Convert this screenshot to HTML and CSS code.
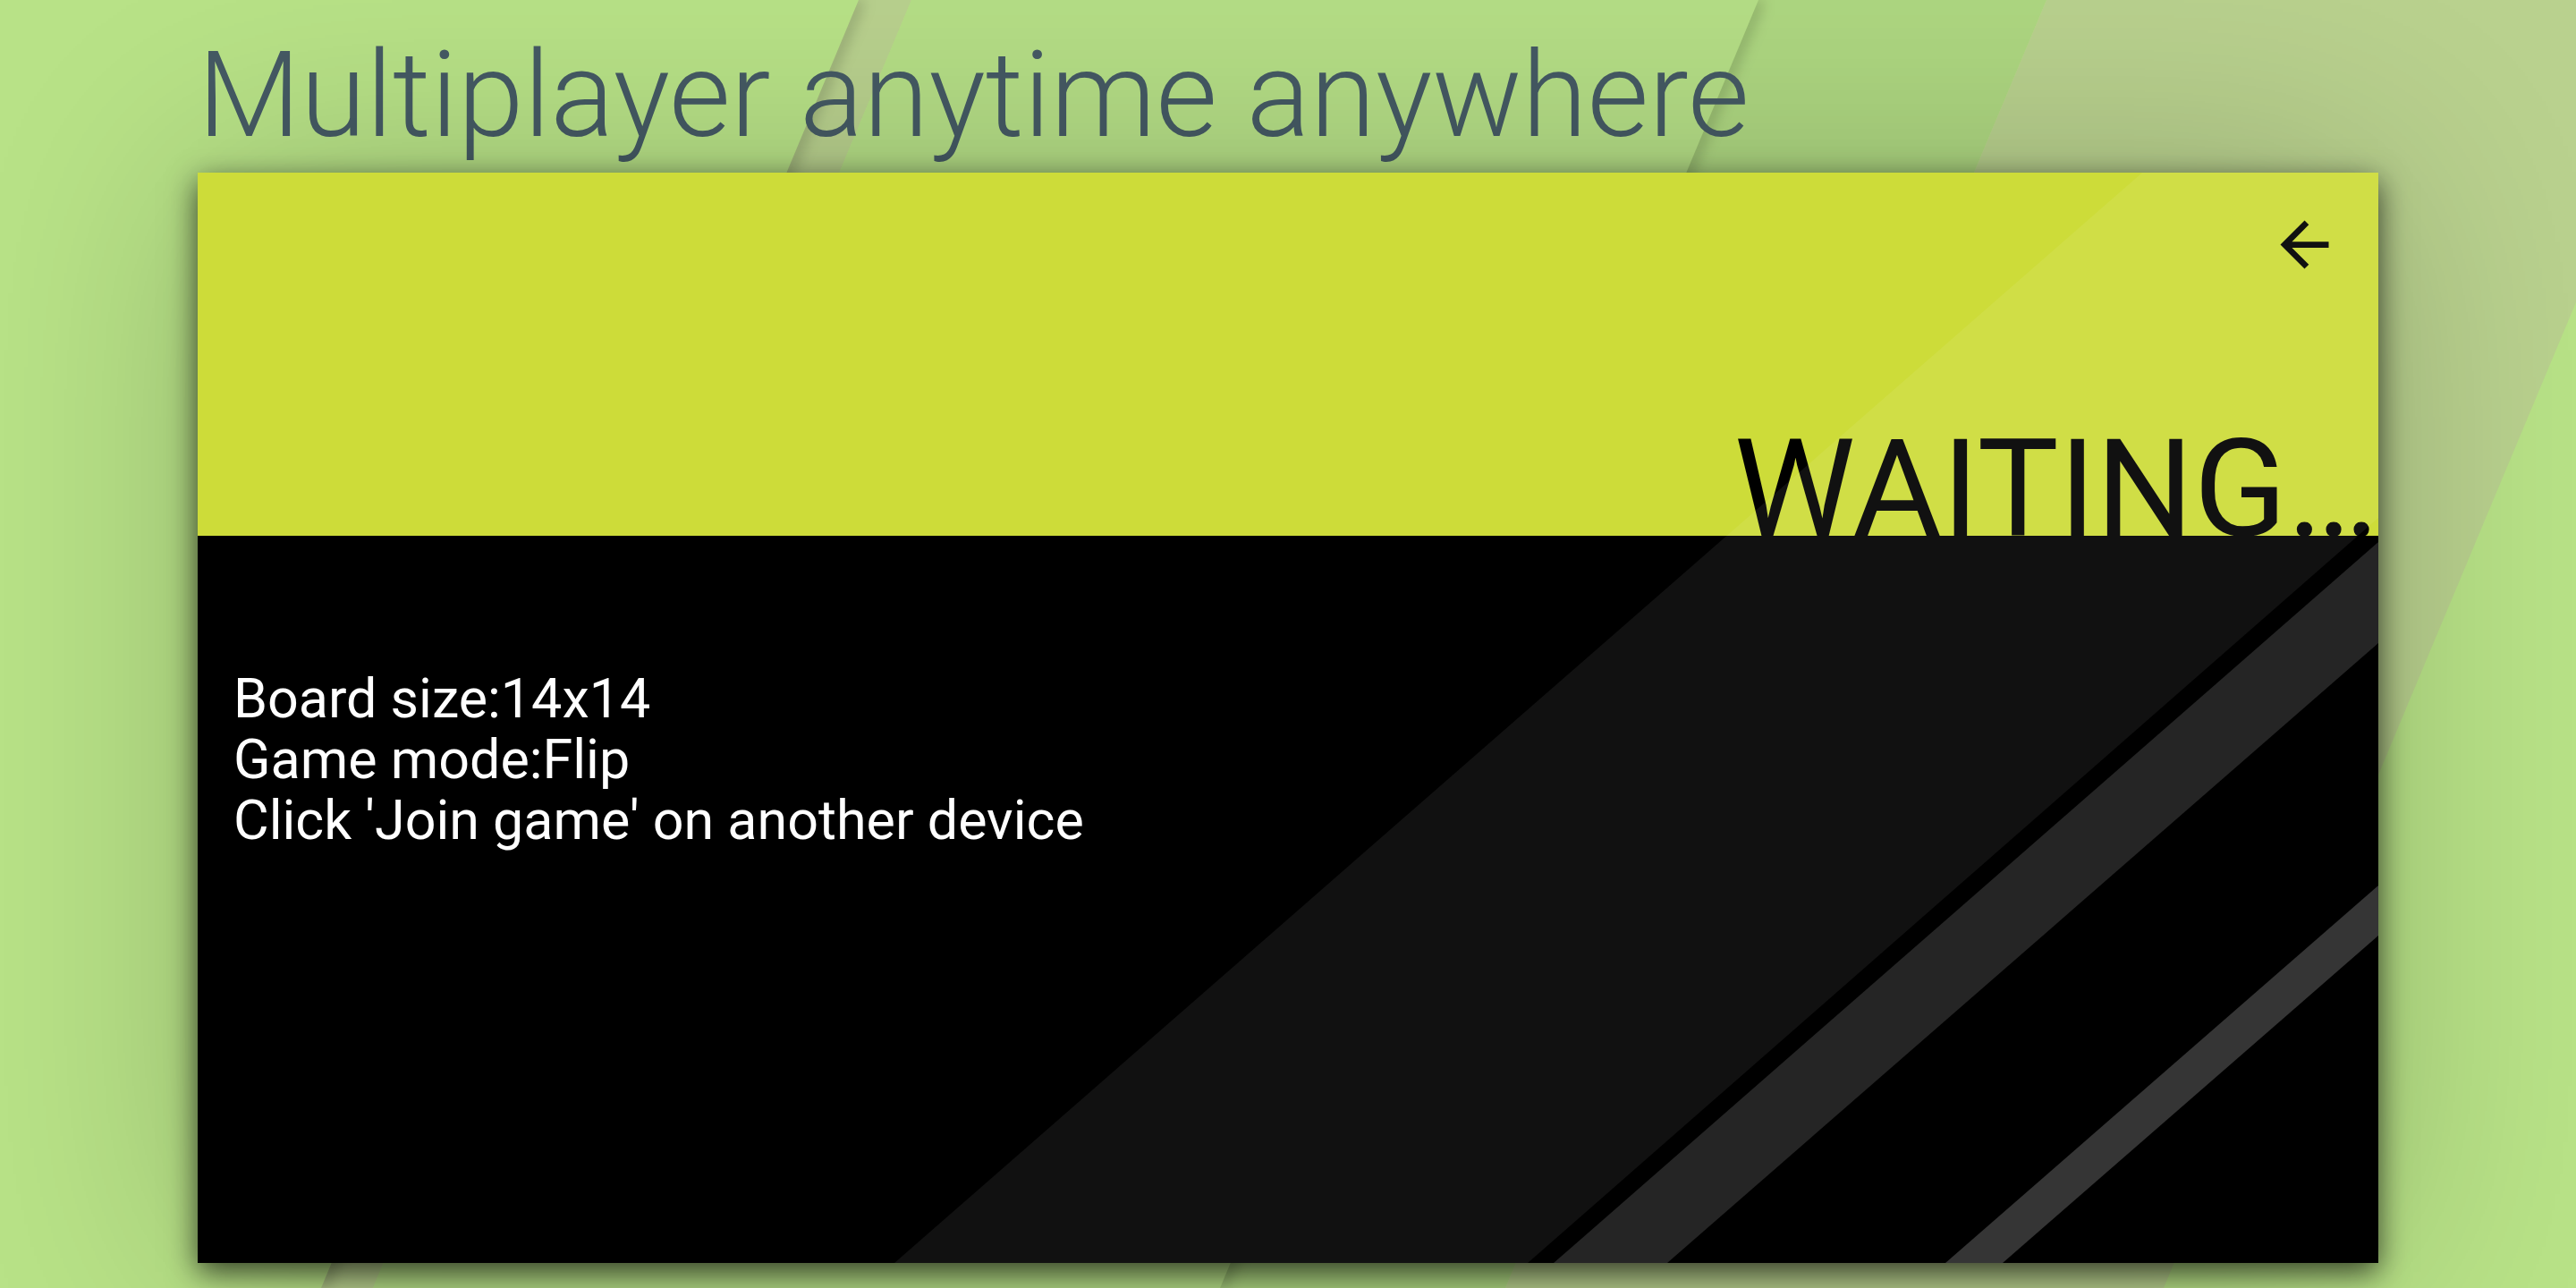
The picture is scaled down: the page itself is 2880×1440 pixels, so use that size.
FILE: index.html
```html
<!DOCTYPE html>
<html lang="en">
<head>
<meta charset="utf-8">
<title>Multiplayer anytime anywhere</title>
<link rel="stylesheet" href="styles.css">
</head>
<body>
<svg class="backdrop" viewBox="0 0 2880 1440" preserveAspectRatio="none" aria-hidden="true">
  <defs>
    <filter id="edge" x="-20%" y="-5%" width="140%" height="110%"><feGaussianBlur stdDeviation="8"/></filter>
    <clipPath id="right-of-first"><path d="M960 0H2880V1440H359Z"/></clipPath>
    <clipPath id="right-of-second"><path d="M1966 0H2880V1440H1364Z"/></clipPath>
  </defs>
  <path class="band-brown" d="M960 0H1019L417 1440H359Z"/>
  <path class="band-light" d="M1019 0H1966L1364 1440H417Z"/>
  <path class="band-green" d="M1966 0H2288L1683 1440H1364Z"/>
  <path class="band-brown" d="M2288 0H2880V338L2419 1440H1683Z"/>
  <g clip-path="url(#right-of-first)"><path class="band-shadow" d="M960 0L359 1440" filter="url(#edge)"/></g>
  <g clip-path="url(#right-of-second)"><path class="band-shadow" d="M1966 0L1364 1440" filter="url(#edge)"/></g>
</svg>
<main class="page">
  <h1 class="headline">Multiplayer anytime anywhere</h1>
  <section class="screen">
    <header class="screen-header">
      <button class="back" type="button" aria-label="Back">
        <svg class="back-icon" viewBox="0 0 24 24" aria-hidden="true"><path d="M20 11H7.83l5.59-5.59L12 4l-8 8 8 8 1.41-1.41L7.83 13H20v-2z"/></svg>
      </button>
      <h2 class="status">WAITING…</h2>
    </header>
    <div class="details">
      <p>Board size:14x14</p>
      <p>Game mode:Flip</p>
      <p>Click 'Join game' on another device</p>
    </div>
    <svg class="stripes" viewBox="0 0 2438 1219" preserveAspectRatio="none" aria-hidden="true">
      <path class="stripe-faint" d="M2174 0H2438V386L1487 1219H779Z"/>
      <path class="stripe-soft" d="M2438 413V526L1643 1219H1516Z"/>
      <path class="stripe-strong" d="M2438 797V853L2018 1219H1954Z"/>
    </svg>
  </section>
</main>
</body>
</html>
```
FILE: styles.css
```css
* {
  box-sizing: border-box;
}

body {
  position: relative;
  margin: 0;
  min-height: 100vh;
  background: #b8e287;
  font-family: Roboto, "Liberation Sans", sans-serif;
  overflow-x: hidden;
}

.backdrop {
  position: absolute;
  inset: 0;
  width: 100%;
  height: 100%;
}

.band-brown {
  fill: #b9d18e;
}

.band-light {
  fill: #b5de86;
}

.band-green {
  fill: #aed781;
}

.band-shadow {
  fill: none;
  stroke: rgba(0, 0, 0, 0.22);
  stroke-width: 12px;
}

.page {
  position: relative;
  padding: 28px 221px;
}

.headline {
  margin: 0 0 8px;
  font-size: 133px;
  font-weight: 300;
  line-height: 157px;
  color: #455a64;
}

.screen {
  position: relative;
  display: grid;
  grid-template-rows: 1fr 2fr;
  aspect-ratio: 2 / 1;
  background: #000;
  box-shadow:
    0 0 240px rgba(0, 0, 0, 0.2),
    0 10px 32px rgba(0, 0, 0, 0.7);
}

.screen-header {
  display: flex;
  flex-direction: column;
  justify-content: space-between;
  align-items: flex-end;
  background: #cddc39;
}

.back {
  margin: 40px 42px 0 0;
  padding: 0;
  border: 0;
  background: none;
  cursor: pointer;
}

.back-icon {
  display: block;
  width: 81px;
  height: 81px;
}

.status {
  margin: 0;
  font-size: 153px;
  font-weight: 400;
  line-height: 104px;
  color: #000;
}

.details {
  padding: 148px 40px;
  font-size: 61px;
  line-height: 68px;
  color: #fff;
}

.details p {
  margin: 0;
}

.stripes {
  position: absolute;
  inset: 0;
  width: 100%;
  height: 100%;
  pointer-events: none;
}

.stripe-faint {
  fill: rgba(255, 255, 255, 0.065);
}

.stripe-soft {
  fill: rgba(255, 255, 255, 0.145);
}

.stripe-strong {
  fill: rgba(255, 255, 255, 0.208);
}
```
